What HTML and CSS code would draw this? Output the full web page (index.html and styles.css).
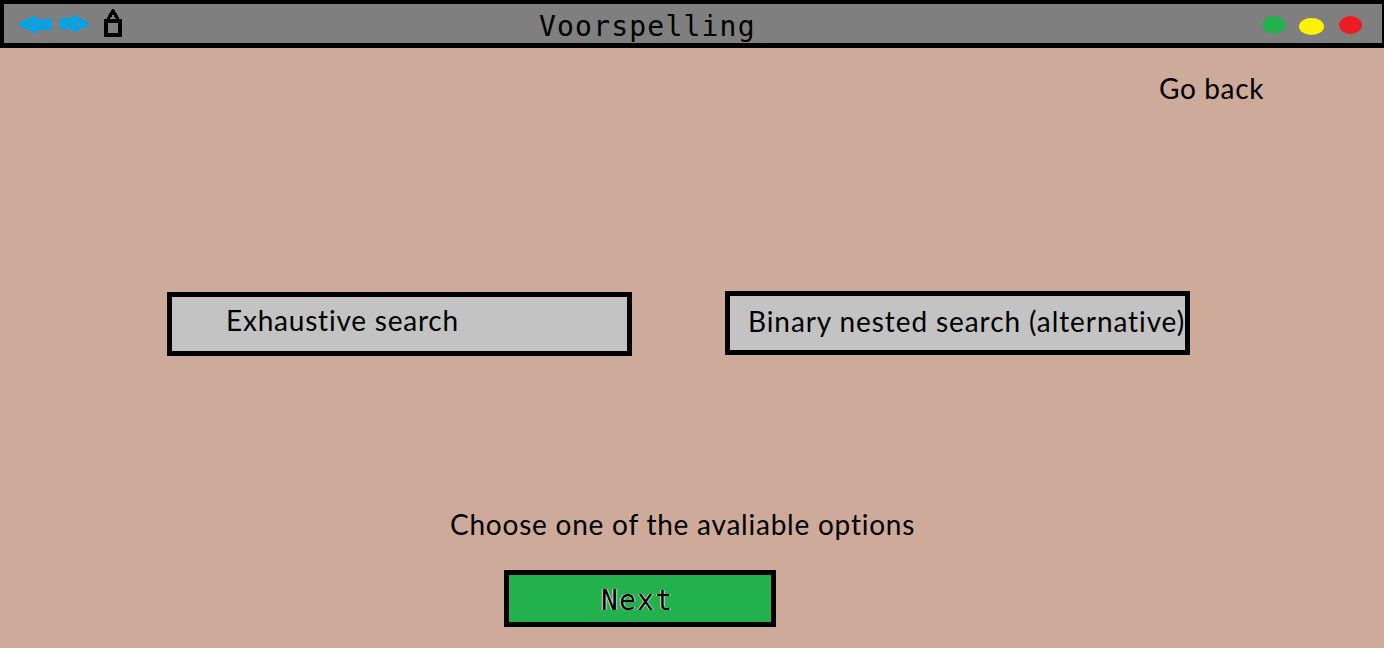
FILE: index.html
```html
<!DOCTYPE html>
<html lang="en">
<head>
<meta charset="utf-8">
<title>Voorspelling</title>
<link rel="stylesheet" href="styles.css">
</head>
<body>
<header class="titlebar">
  <nav class="nav">
    <svg width="136" height="39" viewBox="4 4 136 39" shape-rendering="crispEdges">
      <path class="arrow" d="M19 24L24 20L30 18L33 17V16H36V19H50L52 21V28L50 30H37V32L34 33L31 31L24 28L19 26Z"/>
      <path class="slit" d="M28 24H50V25H34V26H31V25H28Z"/>
      <path class="arrow" d="M60 18H72V16L75 15L78 17L86 21L89 23V25L86 27L78 30L75 32L72 31V29H60Z"/>
      <path class="slit" d="M65 23H76V22H79V25H76V24H65Z"/>
      <path class="house" d="M106 21H120V35H106Z"/>
      <path class="roof" d="M108 19L113 11L118 19"/>
    </svg>
  </nav>
  <h1 class="title">Voorspelling</h1>
  <div class="controls">
    <span class="dot green"></span>
    <span class="dot yellow"></span>
    <span class="dot red"></span>
  </div>
</header>
<main class="content">
  <a class="back">Go back</a>
  <div class="options">
    <div class="option first"><span class="exhaustive">Exhaustive search</span></div>
    <div class="option second"><span class="binary">Binary nested search (alternative)</span></div>
  </div>
  <p class="hint">Choose one of the avaliable options</p>
  <div class="next">Next</div>
</main>
</body>
</html>
```
FILE: styles.css
```css
* { box-sizing: border-box; }
body {
  margin: 0;
  height: 648px;
  overflow: hidden;
  background: #cdaa9a;
  color: #000;
  font: 28px/32px Lato, "Noto Sans", sans-serif;
  font-variant-ligatures: none;
  white-space: nowrap;
}
.titlebar {
  display: flex;
  height: 48px;
  background: #7f7f7f;
  border: solid #000;
  border-width: 4px 2px 5px 4px;
}
.nav { width: 535px; }
.nav svg { display: block; }
.arrow { fill: #00a2e8; }
.slit { fill: #4f8da6; }
.house { fill: none; stroke: #000; stroke-width: 4; }
.roof { fill: none; stroke: #000; stroke-width: 3.4; }
.title, .next {
  font: 28px/32px "DejaVu Sans Mono", monospace;
  letter-spacing: 1.2px;
}
.title { margin: 7px 0 0; width: 722px; }
.controls { display: flex; align-items: flex-start; }
.dot { border-radius: 50%; }
.green { width: 24px; height: 18px; margin: 12px 0 0 1px; background: #22b14c; }
.yellow { width: 25px; height: 17px; margin: 14px 0 0 13px; background: #fff200; }
.red { width: 23px; height: 18px; margin: 12px 0 0 15px; background: #ed1c24; }
.content { display: flex; flex-direction: column; align-items: flex-start; }
.back { margin: 24px 0 0 1159px; letter-spacing: 0.65px; }
.options { display: flex; gap: 93px; margin: 187px 0 0 167px; }
.option {
  width: 465px;
  height: 64px;
  background: #c3c3c3;
  border: 5px solid #000;
}
.first { margin-top: 1px; padding: 7px 0 0 54px; }
.second { padding: 9px 0 0 18px; }
.exhaustive { letter-spacing: 0.78px; }
.binary { letter-spacing: 0.91px; }
.hint { margin: 152px 0 0 450px; letter-spacing: 0.77px; }
.next {
  width: 272px;
  height: 57px;
  margin: 30px 0 0 504px;
  padding: 10px 0 0 92px;
  background: #22b14c;
  border: 5px solid #000;
  text-shadow: 1px 0 #a8e0ff, -1px 0 #ffe0a0;
}
```
